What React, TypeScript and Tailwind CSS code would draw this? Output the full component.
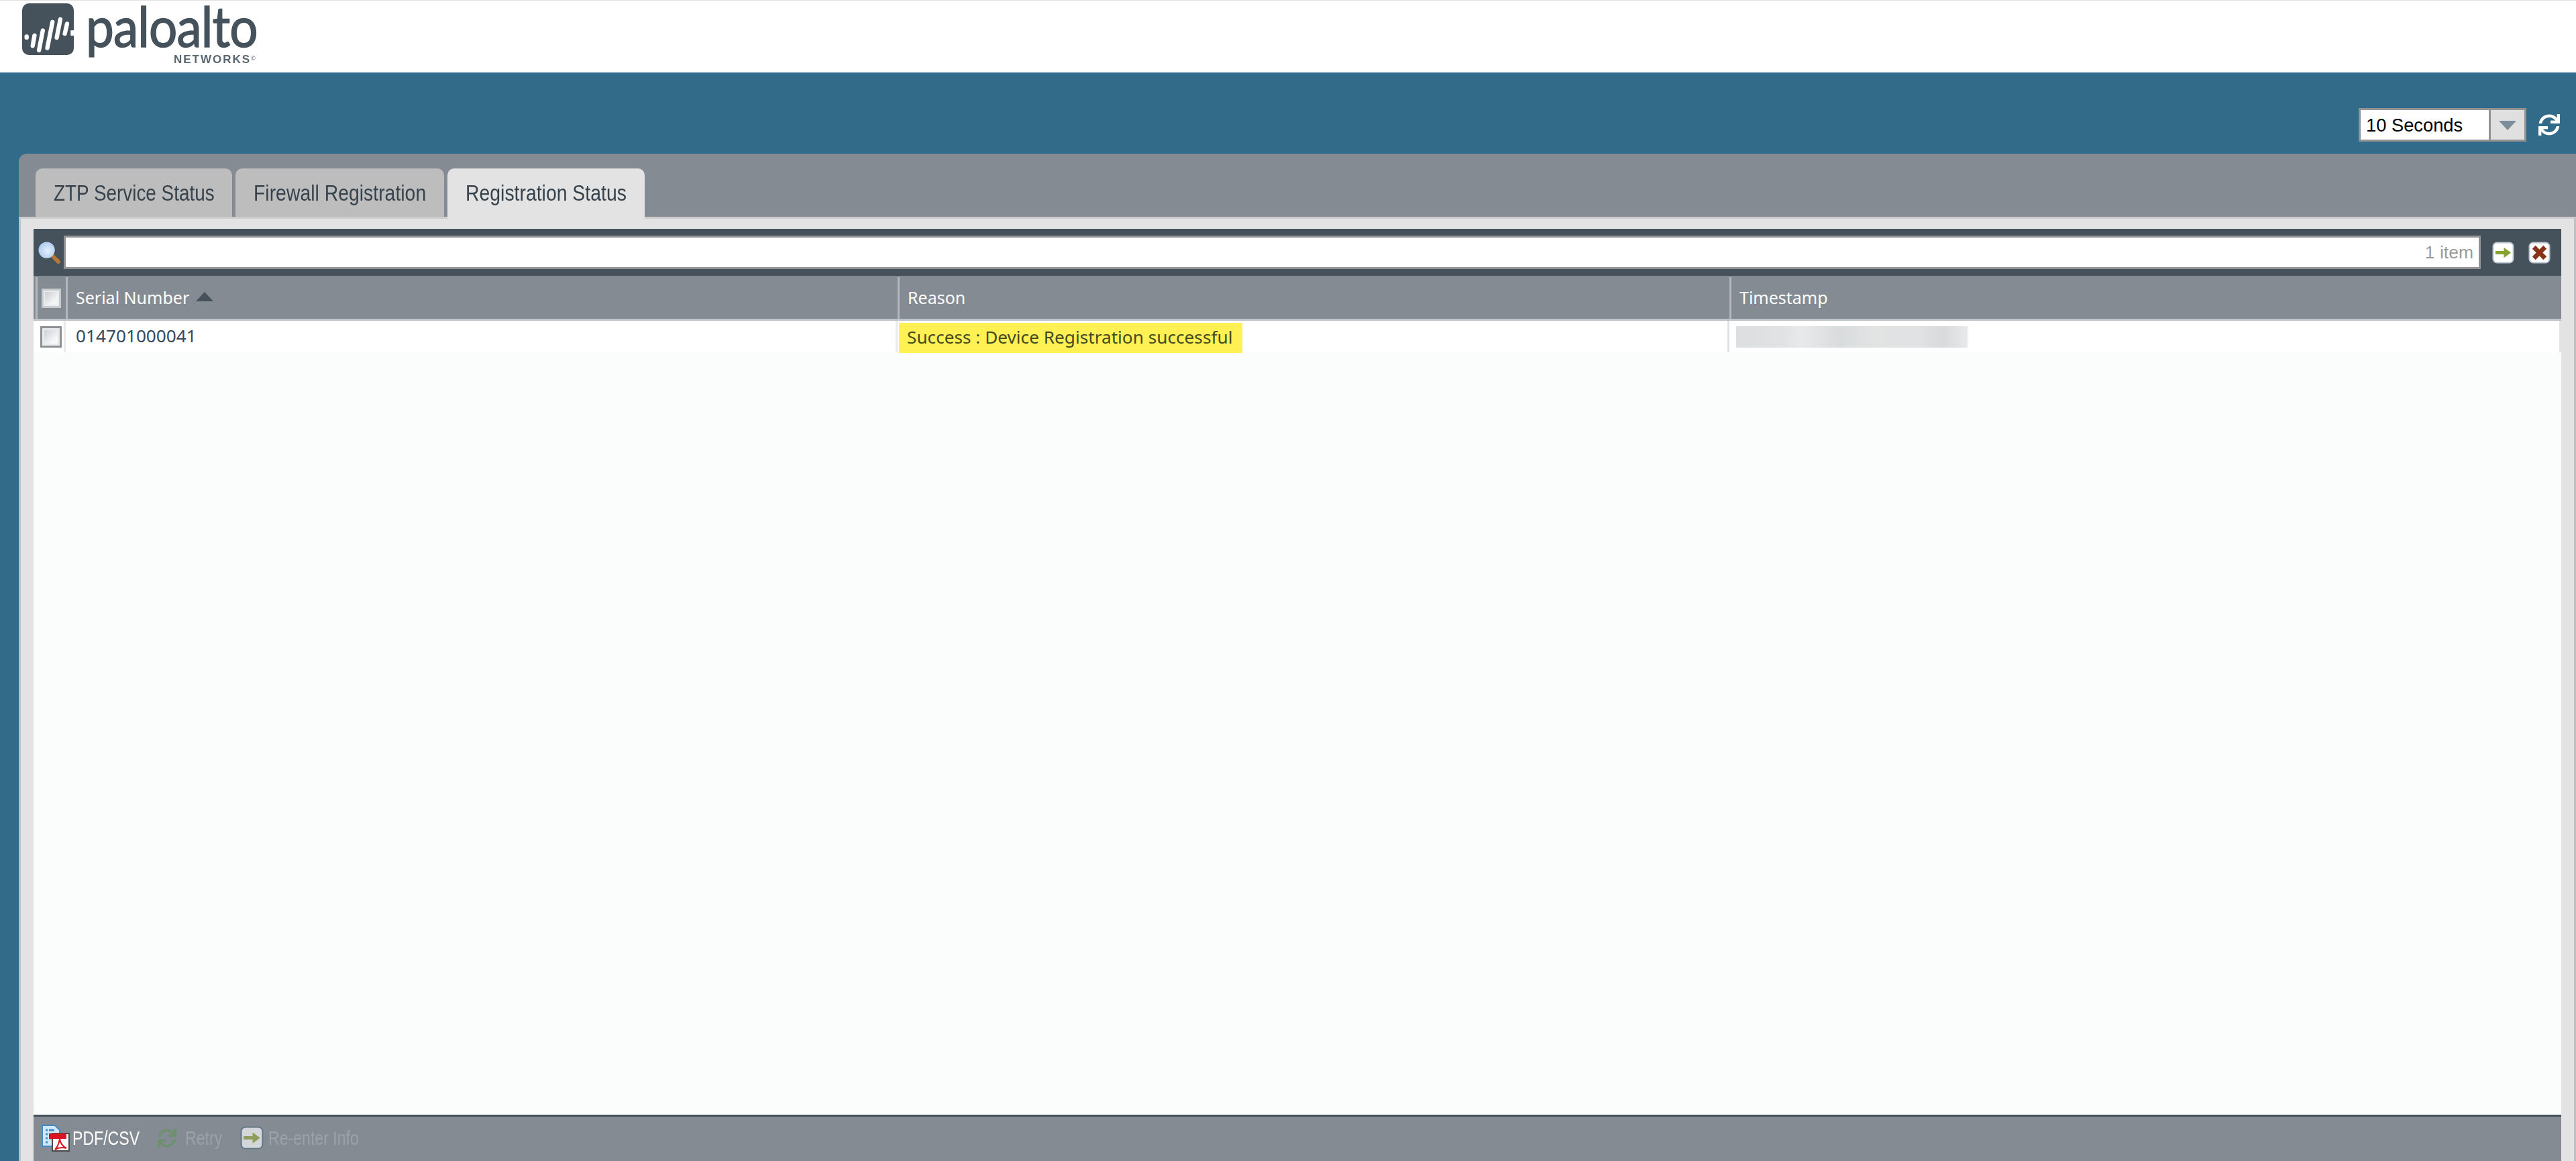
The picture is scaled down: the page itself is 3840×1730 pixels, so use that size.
import { FaSync } from "react-icons/fa";

const uiFont = "font-['Noto_Sans',sans-serif]";
const arialFont = "font-['Liberation_Sans',Arial,sans-serif]";

function LogoMark() {
  return (
    <svg viewBox="40 15 230 230" className="w-[77px] h-[77px] blur-[0.5px] shrink-0">
      <rect x="40" y="15" width="230" height="230" rx="30" fill="#45525c" />
      <rect x="256" y="135" width="16" height="24" fill="#fff" />
      <g stroke="#fff" strokeWidth="19" strokeLinecap="round" fill="none">
        <path d="M60 163v4" />
        <path d="M95 158L87 204" />
        <path d="M132 136L115 224" />
        <path d="M175 98L152 214" />
        <path d="M210 86L194 168" />
        <path d="M240 106L230 150" />
      </g>
    </svg>
  );
}

function ArrowIcon({ faded }: { faded?: boolean }) {
  const bg = faded ? "#dde0e1" : "#ffffff";
  const fg = faded ? "#8fa055" : "#86a42f";
  return (
    <svg viewBox="0 0 34 34" className="w-full h-full">
      <rect x="1.5" y="1.5" width="31" height="31" rx="6" fill={bg} stroke={faded ? "#5f7488" : "#b9c3cc"} strokeWidth="2" />
      <path d="M5 14.5h13V9l11 8-11 8v-5.5H5z" fill={fg} />
    </svg>
  );
}

function CloseIcon() {
  return (
    <svg viewBox="0 0 34 34" className="w-full h-full">
      <rect x="1.5" y="1.5" width="31" height="31" rx="6" fill="#ffffff" stroke="#b9c3cc" strokeWidth="2" />
      <path d="M6 11l5-5 6 6 6-6 5 5-6 6 6 6-5 5-6-6-6 6-5-5 6-6z" fill="#8a3218" />
    </svg>
  );
}

function Magnifier() {
  return (
    <svg viewBox="0 0 34 34" className="w-[33px] h-[33px] shrink-0">
      <defs>
        <radialGradient id="lens" cx="0.55" cy="0.55" r="0.6">
          <stop offset="0" stopColor="#e6f0fb" />
          <stop offset="1" stopColor="#a9c9ee" />
        </radialGradient>
      </defs>
      <path d="M22 22l9 9" stroke="#b5763a" strokeWidth="6" strokeLinecap="round" />
      <circle cx="13" cy="13" r="12.5" fill="url(#lens)" />
    </svg>
  );
}

function PdfIcon() {
  return (
    <svg viewBox="0 0 42 40" className="w-[42px] h-[40px] shrink-0">
      <path d="M1 1h19l7 7v24H1z" fill="#d5e6f4" stroke="#3f8cc6" strokeWidth="2" />
      <path d="M6 8h3M6 14h3M6 20h3M6 26h3M11 8h8M11 14h10M11 20h10" stroke="#3f8cc6" strokeWidth="3" />
      <rect x="16" y="13" width="25" height="26" fill="#fff" stroke="#4b4b4b" strokeWidth="2" />
      <path d="M11 13h26v8H11z" fill="#d91420" />
      <path d="M20 37c4-4 6-10 7-16 1 6 4 11 10 14-6-2-12-1-17 2z" fill="none" stroke="#d91420" strokeWidth="2" />
    </svg>
  );
}

function CheckBox({ header }: { header?: boolean }) {
  return (
    <div
      className={
        header
          ? "w-[29px] h-[29px] border-[3px] border-[#c8cbce] bg-[linear-gradient(135deg,#c4c8cc,#f4f5f6_70%)] shadow-[inset_0_0_0_2px_#eceded]"
          : "w-[32px] h-[32px] border-[3px] border-[#8f9294] bg-[linear-gradient(135deg,#c4c8d0,#f6f7f8_70%)] shadow-[inset_0_0_0_3px_#e8e9ea]"
      }
    />
  );
}

function Tab({ label, width, active, scale }: { label: string; width: string; active?: boolean; scale: string }) {
  return (
    <div
      className={`${width} rounded-t-[10px] pl-[27px] pt-[12px] overflow-hidden whitespace-nowrap text-[34px] leading-[48px] text-[#36424c] ${arialFont} ${
        active ? "h-[75px] bg-[#e3e3e3] relative z-10" : "h-[72px] bg-[#bdbdbd]"
      }`}
    >
      <span className={`inline-block origin-left ${scale}`}>{label}</span>
    </div>
  );
}

export default function App() {
  return (
    <div className="w-[3840px] h-[1730px] overflow-hidden flex flex-col bg-[#326a8a]">
      {/* Brand bar */}
      <header className="h-[108px] shrink-0 bg-white border-t-[1px] border-[#e0e0e0] pl-[33px] pt-[4px] flex items-start">
        <LogoMark />
        <div className="ml-[18px] w-[290px] h-[100px] flex flex-col text-[#45525c] blur-[0.4px]">
          <span className="font-['Lato',sans-serif] text-[84px] leading-[78px] mt-[-6px] tracking-[-1px] origin-left scale-x-[0.89] inline-block whitespace-nowrap h-[78px] [-webkit-text-stroke:1.5px_#45525c]">
            paloalto
          </span>
          <span className={`ml-[131px] mt-[4px] text-[17px] leading-[16px] font-bold tracking-[2px] text-[#5a6670] whitespace-nowrap ${arialFont}`}>
            NETWORKS<sup className="text-[9px] font-normal tracking-normal">©</sup>
          </span>
        </div>
      </header>

      {/* Refresh controls */}
      <div className="h-[121px] shrink-0 flex justify-end items-start pt-[53px] pr-[23px]">
        <div className="flex w-[250px] h-[50px] border-[3px] border-[#939393] bg-[#e0e0e0]">
          <div className={`w-[194px] bg-white text-[27.3px] leading-[45px] pl-[8px] text-black border-r-[3px] border-[#939393] ${arialFont}`}>
            10 Seconds
          </div>
          <div className="flex-1 flex items-center justify-center">
            <div className="w-0 h-0 border-l-[13px] border-r-[13px] border-t-[14px] border-l-transparent border-r-transparent border-t-[#7d8d9b] mt-[2px]" />
          </div>
        </div>
        <div className="ml-[17px] w-[34px] h-[50px] flex items-center justify-center text-white">
          <FaSync className="w-[34px] h-[32px]" />
        </div>
      </div>

      {/* Main panel */}
      <div className="flex-1 min-h-0 ml-[28px] rounded-tl-[12px] bg-[#858b92] flex flex-col">
        <div className="flex gap-[5px] pl-[25px] pt-[22px] h-[94px] shrink-0">
          <Tab label="ZTP Service Status" width="w-[293px]" scale="scale-x-[0.82]" />
          <Tab label="Firewall Registration" width="w-[311px]" scale="scale-x-[0.835]" />
          <Tab label="Registration Status" width="w-[294px]" scale="scale-x-[0.835]" active />
        </div>

        <div className="flex-1 min-h-0 flex flex-col bg-[#e3e3e3] border-x-[3px] border-t-[3px] border-x-[#c0c0c0] border-t-[#cdcdcd] pt-[15px] px-[19px]">
          {/* Search bar */}
          <div className="h-[70px] shrink-0 bg-[#45515b] flex items-center pl-[7px]">
            <Magnifier />
            <div className={`ml-[5px] w-[3603px] h-[50px] border-[3px] border-[#939393] bg-white text-right text-[26.5px] leading-[44px] pr-[8px] text-[#9a9a9a] ${arialFont}`}>
              1 item
            </div>
            <div className="ml-[17px] w-[33px] h-[33px]">
              <ArrowIcon />
            </div>
            <div className="ml-[21px] w-[33px] h-[33px]">
              <CloseIcon />
            </div>
          </div>

          {/* Table header */}
          <div className={`h-[67px] shrink-0 bg-[#858b92] border-b-[3px] border-[#bfc3ca] flex pt-[2px] text-white text-[25px] ${uiFont}`}>
            <div className="w-[3px]" />
            <div className="w-[45px] border-l-[3px] border-[#b4b8be] flex items-center pl-[6px]">
              <CheckBox header />
            </div>
            <div className="w-[1240px] border-l-[3px] border-[#b4b8be] flex items-center pl-[12px] gap-[8px]">
              <span>Serial Number</span>
              <span className="w-0 h-0 border-l-[13px] border-r-[13px] border-b-[14px] border-l-transparent border-r-transparent border-b-[#45515b] ml-[2px] mt-[-4px]" />
            </div>
            <div className="w-[1240px] border-l-[3px] border-[#b4b8be] flex items-center pl-[12px]">Reason</div>
            <div className="flex-1 border-l-[3px] border-[#b4b8be] flex items-center pl-[12px]">Timestamp</div>
          </div>

          {/* Table body */}
          <div className="flex-1 min-h-0 bg-[#fbfdfc]">
            <div className={`h-[47px] bg-white flex text-[26.2px] text-[#36485a] border-r-[3px] border-[#e3e3e3] ${uiFont}`}>
              <div className="w-[45px] pl-[10px] pt-[8px]">
                <CheckBox />
              </div>
              <div className="w-[1240px] border-l-[3px] border-[#e8eaec] pl-[15px] leading-[44px]">014701000041</div>
              <div className="w-[1240px] border-l-[3px] border-[#e8eaec] pl-[2px] pt-[3px]">
                <div className="w-[512px] h-[45px] bg-[#fff154] text-[#44491f] pl-[12px] leading-[42px] whitespace-nowrap">
                  Success : Device Registration successful
                </div>
              </div>
              <div className="flex-1 border-l-[3px] border-[#dfe2e5] pl-[10px] pt-[8px]">
                <div className="w-[345px] h-[32px] bg-[linear-gradient(90deg,#dcdfe0,#e0e2e3_20%,#e8e9ea_28%,#d9dcdd_45%,#e2e4e4_60%,#dfe1e2_80%,#d8dadb_90%,#e8e9ea)]" />
              </div>
            </div>
          </div>

          {/* Footer */}
          <div className={`h-[69px] shrink-0 bg-[#858b92] border-t-[3px] border-[#45515b] flex items-center pl-[12px] pb-[3px] text-[30px] leading-[40px] whitespace-nowrap ${arialFont}`}>
            <PdfIcon />
            <div className="w-[125px] ml-[4px] text-white">
              <span className="inline-block origin-left scale-x-[0.77]">PDF/CSV</span>
            </div>
            <FaSync className="w-[32px] h-[28px] text-[#6f9070]" />
            <div className="w-[82px] ml-[11px] text-[#9da2a8]">
              <span className="inline-block origin-left scale-x-[0.77]">Retry</span>
            </div>
            <div className="w-[35px] h-[35px] opacity-90">
              <ArrowIcon faded />
            </div>
            <div className="ml-[7px] text-[#9da2a8]">
              <span className="inline-block origin-left scale-x-[0.77]">Re-enter Info</span>
            </div>
          </div>
        </div>
      </div>
    </div>
  );
}
